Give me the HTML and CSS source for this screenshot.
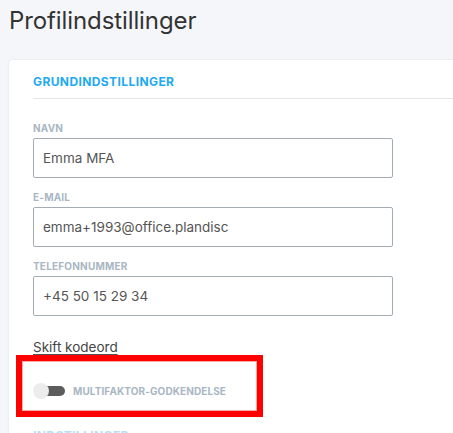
FILE: index.html
```html
<!DOCTYPE html>
<html lang="da">
<head>
    <meta charset="UTF-8">
    <meta name="viewport" content="width=device-width, initial-scale=1.0">
    <title>Profilindstillinger</title>
    <link rel="stylesheet" href="styles.css">
</head>
<body>
    <div class="page">
        <h1 class="page-title">Profilindstillinger</h1>
        <div class="card">
            <div class="card-header">Grundindstillinger</div>
            <div class="form-group">
                <label for="name">Navn</label>
                <input type="text" id="name" value="Emma MFA">
            </div>
            <div class="form-group">
                <label for="email">E-mail</label>
                <input type="text" id="email" value="emma+1993@office.plandisc">
            </div>
            <div class="form-group">
                <label for="phone">Telefonnummer</label>
                <input type="text" id="phone" value="+45 50 15 29 34">
            </div>
            <a class="change-password" href="#">Skift kodeord</a>
            <div class="toggle-row">
                <span class="toggle"><span class="toggle-knob"></span></span>
                <span class="toggle-label">Multifaktor-godkendelse</span>
            </div>
            <div class="card-header next">Indstillinger</div>
        </div>
    </div>
    <div class="highlight"></div>
</body>
</html>
```

FILE: styles.css
```css
* {
    margin: 0;
    padding: 0;
    box-sizing: border-box;
}

body {
    font-family: Inter, "Noto Sans", sans-serif;
    background-color: #f5f6fa;
    width: 453px;
    height: 433px;
    overflow: hidden;
    position: relative;
}

.page {
    padding: 6px 0 0 9px;
}

.page-title {
    font-size: 24px;
    font-weight: 400;
    color: #333;
    line-height: 30px;
    letter-spacing: -0.1px;
}

.card {
    margin-top: 24px;
    margin-right: -30px;
    background-color: #fff;
    border-radius: 4px;
    box-shadow: 0 0 3px rgba(0, 0, 0, 0.08);
    padding: 14px 0 0 24px;
    height: 420px;
}

.card-header {
    font-size: 12px;
    font-weight: 700;
    color: #1eaaf1;
    text-transform: uppercase;
    letter-spacing: 0.4px;
    line-height: 16px;
    padding-bottom: 8px;
    border-bottom: 1px solid #e4e6ea;
    margin-bottom: 23px;
}

.card-header.next {
    color: #b5dff7;
    border-bottom: none;
    margin-top: 19px;
}

.form-group {
    width: 360px;
    margin-bottom: 13px;
}

label {
    display: block;
    font-size: 10px;
    font-weight: 700;
    color: #a9b6c3;
    text-transform: uppercase;
    letter-spacing: 0.2px;
    line-height: 12px;
    margin-bottom: 4px;
}

input {
    width: 100%;
    height: 40px;
    padding: 0 9px;
    font-family: inherit;
    font-size: 13.5px;
    color: #555;
    border: 1px solid #a2acb5;
    border-radius: 2px;
    outline: none;
}

.change-password {
    display: inline-block;
    margin-top: 9px;
    font-size: 13.5px;
    color: #444;
    text-decoration: underline;
    text-decoration-color: #555;
    text-underline-offset: 2px;
    line-height: 18px;
}

.toggle-row {
    display: flex;
    align-items: center;
    gap: 8px;
    margin-top: 17px;
    height: 36px;
}

.toggle {
    position: relative;
    width: 32px;
    height: 10px;
}

.toggle::before {
    content: "";
    position: absolute;
    left: 7px;
    top: 0;
    width: 25px;
    height: 10px;
    border-radius: 5px;
    background-color: #5c5c5c;
}

.toggle-knob {
    position: absolute;
    left: 0;
    top: -3px;
    width: 16px;
    height: 16px;
    border-radius: 50%;
    background-color: #ececec;
}

.toggle-label {
    font-size: 10px;
    font-weight: 700;
    color: #a9b6c3;
    text-transform: uppercase;
    letter-spacing: 0.1px;
}

.highlight {
    position: absolute;
    left: 16px;
    top: 355px;
    width: 247px;
    height: 62px;
    border: 6px solid #ff0000;
    box-shadow: inset 0 0 0 1px #f7aaaa;
}
```
